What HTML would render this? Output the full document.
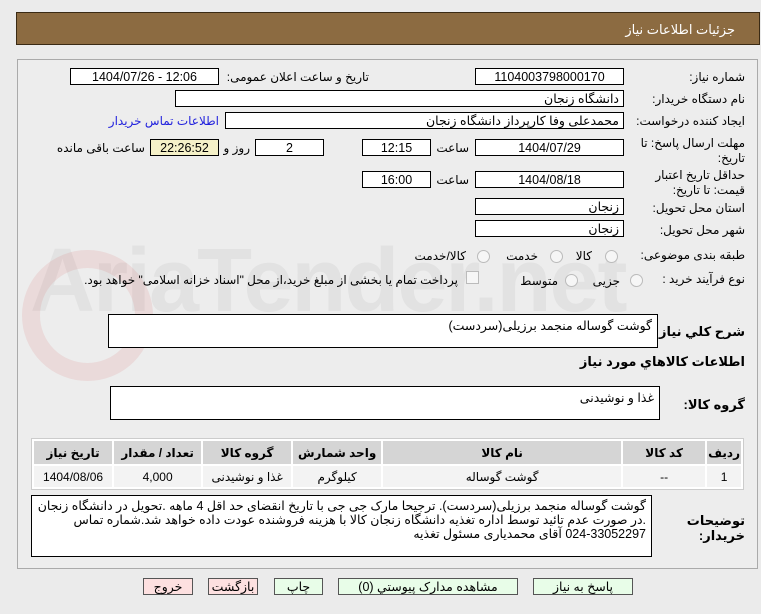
<!DOCTYPE html>
<html><head><meta charset="utf-8"><style>
body{margin:0;width:761px;height:614px;background:#ebebeb;font-family:"Liberation Sans","DejaVu Sans",sans-serif;font-size:12px;color:#000;position:relative;overflow:hidden}
.a{position:absolute}
.hdr{left:16px;top:12px;width:742px;height:31px;background:#8c6b41;border:1px solid #3a2a14}
.hdr span{position:absolute;right:24px;top:9px;color:#fff;font-size:13px}
.panel{left:17px;top:59px;width:739px;height:508px;border:1px solid #aaa;background:#ededed}
.box{position:absolute;background:#fff;border:1px solid #000;height:17px;line-height:17px;text-align:center;font-size:12.5px;box-sizing:border-box}
.r{direction:rtl;text-align:right;padding-right:4px}
.lbl{position:absolute;direction:rtl;text-align:right;white-space:nowrap;font-size:12px}
.rad{position:absolute;width:11px;height:11px;border:1px solid #bbb;border-radius:50%;background:#f6f6f6}
.ta{position:absolute;background:#fff;border:1px solid #000;direction:rtl;text-align:right;padding:3px 5px;box-sizing:border-box;font-size:12.5px}
table{position:absolute;left:31px;top:438px;width:713px;border-collapse:separate;border-spacing:2px;background:#fff;border:1px solid #ccc;direction:rtl}
th{background:#d5d5d5;height:21px;font-size:12px;font-weight:bold}
td{background:#f3f3f3;height:19px;text-align:center;font-size:12px}
.btn{position:absolute;top:578px;height:17px;border:1px solid #555;background:#e8fde8;text-align:center;line-height:17px;font-size:12.5px;box-sizing:border-box}
</style></head><body>
<div class="a hdr"><span>جزئیات اطلاعات نیاز</span></div>
<div class="a panel"></div>
<div class="a" style="left:30px;top:230px;font-size:90px;font-weight:bold;color:rgba(150,150,150,0.12);white-space:nowrap;letter-spacing:-2px">AriaTender.net</div>
<div class="a" style="left:22px;top:250px;width:95px;height:95px;border:18px solid rgba(220,120,120,0.16);border-radius:50%"></div>

<div class="lbl" style="right:16px;top:70px">شماره نیاز:</div>
<div class="box" style="left:475px;top:68px;width:149px">1104003798000170</div>
<div class="lbl" style="right:392px;top:70px">تاریخ و ساعت اعلان عمومی:</div>
<div class="box" style="left:70px;top:68px;width:149px">1404/07/26 - 12:06</div>

<div class="lbl" style="right:16px;top:92px">نام دستگاه خریدار:</div>
<div class="box r" style="left:175px;top:90px;width:449px">دانشگاه زنجان</div>

<div class="lbl" style="right:16px;top:114px">ایجاد کننده درخواست:</div>
<div class="box r" style="left:225px;top:112px;width:399px">محمدعلی وفا کارپرداز دانشگاه زنجان</div>
<div class="lbl" style="right:542px;top:114px;color:#2222dd">اطلاعات تماس خریدار</div>

<div class="lbl" style="right:16px;top:136px;line-height:15px">مهلت ارسال پاسخ: تا<br>تاریخ:</div>
<div class="box" style="left:475px;top:139px;width:149px">1404/07/29</div>
<div class="lbl" style="right:292px;top:141px">ساعت</div>
<div class="box" style="left:362px;top:139px;width:69px">12:15</div>
<div class="box" style="left:255px;top:139px;width:69px">2</div>
<div class="lbl" style="right:511px;top:141px">روز و</div>
<div class="box" style="left:150px;top:139px;width:69px;background:#f5f1c8">22:26:52</div>
<div class="lbl" style="right:616px;top:141px">ساعت باقی مانده</div>

<div class="lbl" style="right:16px;top:168px;line-height:15px">حداقل تاریخ اعتبار<br>قیمت: تا تاریخ:</div>
<div class="box" style="left:475px;top:171px;width:149px">1404/08/18</div>
<div class="lbl" style="right:292px;top:173px">ساعت</div>
<div class="box" style="left:362px;top:171px;width:69px">16:00</div>

<div class="lbl" style="right:16px;top:201px">استان محل تحویل:</div>
<div class="box r" style="left:475px;top:198px;width:149px">زنجان</div>
<div class="lbl" style="right:16px;top:223px">شهر محل تحویل:</div>
<div class="box r" style="left:475px;top:220px;width:149px">زنجان</div>

<div class="lbl" style="right:16px;top:248px">طبقه بندی موضوعی:</div>
<div class="rad" style="left:605px;top:250px"></div><div class="lbl" style="right:169px;top:249px">کالا</div>
<div class="rad" style="left:550px;top:250px"></div><div class="lbl" style="right:223px;top:249px">خدمت</div>
<div class="rad" style="left:477px;top:250px"></div><div class="lbl" style="right:295px;top:249px">کالا/خدمت</div>

<div class="lbl" style="right:16px;top:272px">نوع فرآیند خرید :</div>
<div class="rad" style="left:630px;top:274px"></div><div class="lbl" style="right:141px;top:274px">جزیی</div>
<div class="rad" style="left:565px;top:274px"></div><div class="lbl" style="right:203px;top:274px">متوسط</div>
<div class="a" style="left:466px;top:271px;width:11px;height:11px;border:1px solid #bbb;background:#f6f6f6"></div>
<div class="lbl" style="right:303px;top:273px">پرداخت تمام یا بخشی از مبلغ خرید،از محل "اسناد خزانه اسلامی" خواهد بود.</div>

<div class="lbl" style="right:16px;top:324px;font-weight:bold;font-size:13px">شرح کلي نياز:</div>
<div class="ta" style="left:108px;top:314px;width:550px;height:34px">گوشت گوساله منجمد برزیلی(سردست)</div>
<div class="lbl" style="right:16px;top:354px;font-weight:bold;font-size:13px">اطلاعات کالاهاي مورد نياز</div>
<div class="lbl" style="right:16px;top:397px;font-weight:bold;font-size:13px">گروه کالا:</div>
<div class="ta" style="left:110px;top:386px;width:550px;height:34px">غذا و نوشیدنی</div>

<table>
<tr><th style="width:26px">ردیف</th><th style="width:80px">کد کالا</th><th style="width:236px">نام کالا</th><th style="width:86px">واحد شمارش</th><th style="width:86px">گروه کالا</th><th style="width:85px">تعداد / مقدار</th><th>تاریخ نیاز</th></tr>
<tr><td>1</td><td>--</td><td>گوشت گوساله</td><td>کیلوگرم</td><td>غذا و نوشیدنی</td><td>4,000</td><td>1404/08/06</td></tr>
</table>

<div class="lbl" style="right:16px;top:513px;font-weight:bold;font-size:13px;line-height:15px">توضیحات<br>خریدار:</div>
<div class="ta" style="left:31px;top:495px;width:621px;height:62px;line-height:14px">گوشت گوساله منجمد برزیلی(سردست). ترجیحا مارک جی جی  با تاریخ انقضای حد اقل 4 ماهه .تحویل در دانشگاه زنجان .در صورت عدم تائید توسط اداره تغذیه دانشگاه زنجان کالا با هزینه فروشنده عودت داده خواهد شد.شماره تماس 33052297-024 آقای محمدیاری مسئول تغذیه</div>

<div class="btn" style="left:533px;width:100px">پاسخ به نیاز</div>
<div class="btn" style="left:338px;width:180px">مشاهده مدارک پیوستي (0)</div>
<div class="btn" style="left:274px;width:49px">چاپ</div>
<div class="btn" style="left:208px;width:50px;background:#fde0e0">بازگشت</div>
<div class="btn" style="left:143px;width:50px;background:#fde0e0">خروج</div>
</body></html>
